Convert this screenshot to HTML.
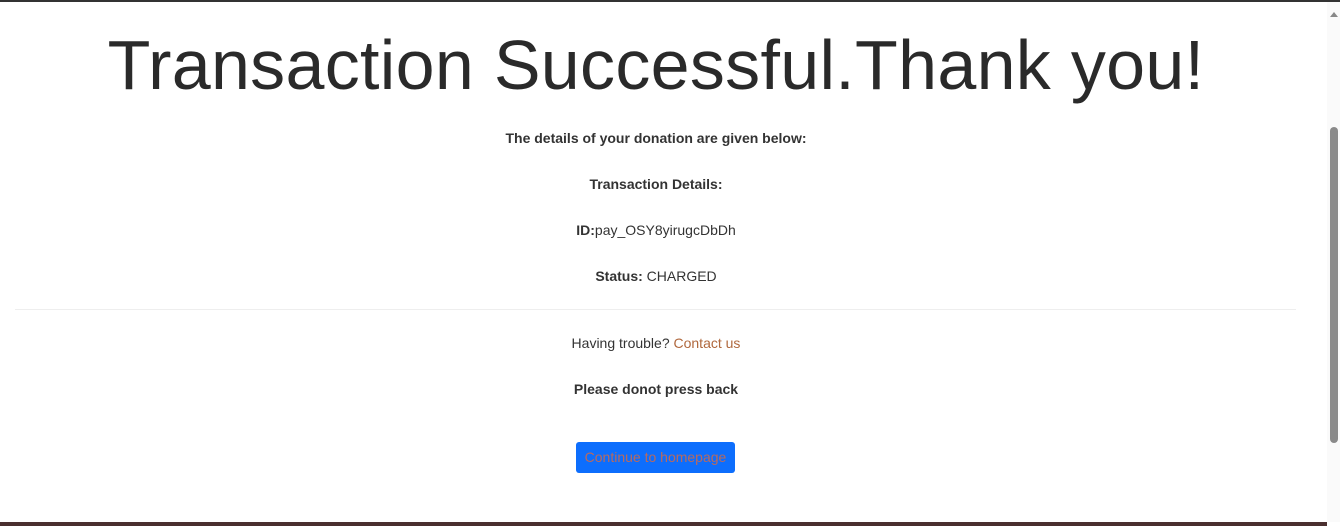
<!DOCTYPE html>
<html><head><style>
html,body{margin:0;padding:0;width:1340px;height:526px;overflow:hidden;background:#fff;font-family:"Liberation Sans",Arial,sans-serif;color:#333;}
.top{position:absolute;left:0;top:0;width:1340px;height:2px;background:#333;}
.bot{position:absolute;left:0;top:522px;width:1327px;height:4px;background:#4a2f2f;}
.sb{position:absolute;left:1327px;top:2px;width:13px;height:520px;background:#fafafa;}
.thumb{position:absolute;left:1330px;top:127px;width:8px;height:316px;background:#8a8a8a;border-radius:4px;}
.arrow{position:absolute;left:1330px;top:12px;width:0;height:0;border-left:4px solid transparent;border-right:4px solid transparent;border-bottom:5px solid #888;}
h1{position:absolute;left:0;width:1312px;top:22px;margin:0;text-align:center;font-weight:300;font-size:70px;line-height:86px;color:#2a2a2a;letter-spacing:0.3px;}
.l{position:absolute;left:0;width:1312px;text-align:center;font-size:14px;line-height:18px;}
b{font-weight:bold;}
hr{position:absolute;left:15px;top:309px;width:1281px;margin:0;border:0;border-top:1px solid #eee;}
a{color:#b0683d;text-decoration:none;}
.btn{position:absolute;left:576px;top:442px;width:159px;height:31px;background:#0d6efd;border-radius:3px;color:#b86a5f;font-size:14px;line-height:31px;text-align:center;}
</style></head><body>
<div class="top"></div>
<h1>Transaction Successful.Thank you!</h1>
<div class="l" style="top:129px"><b>The details of your donation are given below:</b></div>
<div class="l" style="top:175px"><b>Transaction Details:</b></div>
<div class="l" style="top:221px"><b>ID:</b>pay_OSY8yirugcDbDh</div>
<div class="l" style="top:267px"><b>Status:</b> CHARGED</div>
<hr>
<div class="l" style="top:334px">Having trouble? <a>Contact us</a></div>
<div class="l" style="top:380px"><b>Please donot press back</b></div>
<div class="btn">Continue to homepage</div>
<div class="sb"></div><div class="arrow"></div><div class="thumb"></div>
<div class="bot"></div>
</body></html>
